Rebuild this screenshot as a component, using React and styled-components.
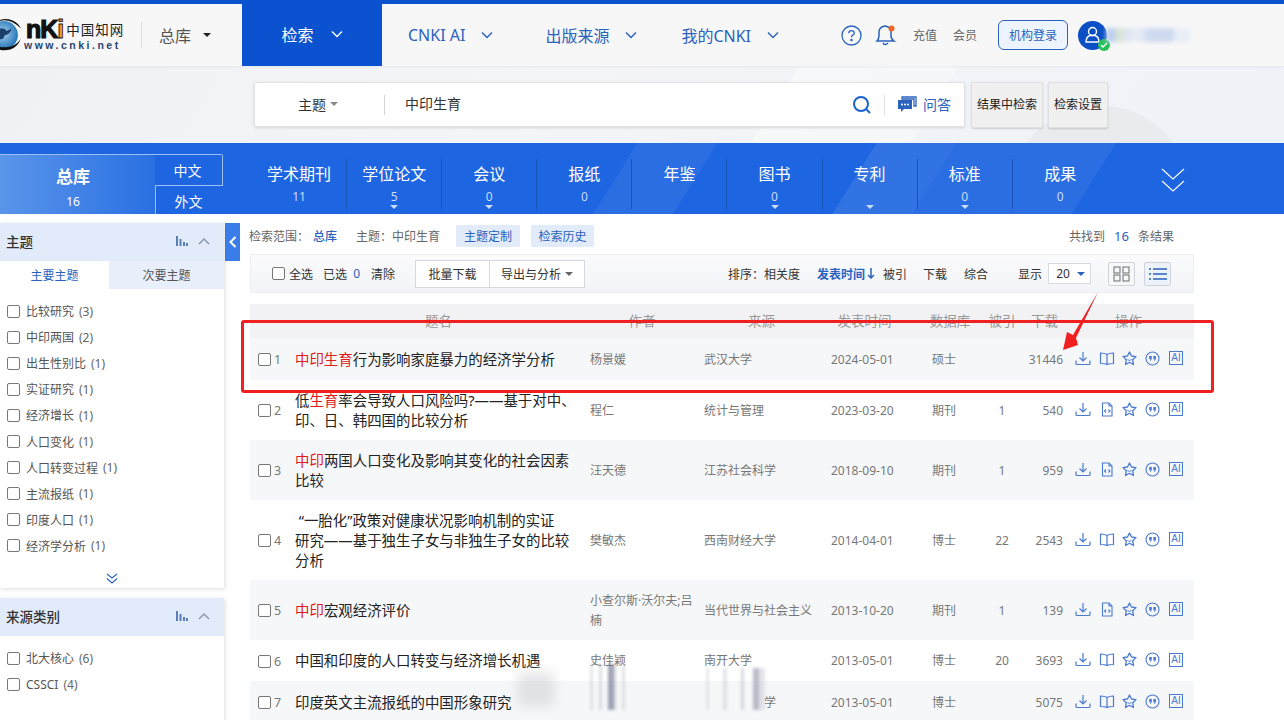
import React from 'react';
import styled, { createGlobalStyle } from 'styled-components';

const Global = createGlobalStyle`
  html, body { margin: 0; padding: 0; background: #fff; }
  body { font-family: "Noto Sans", "Noto Sans CJK SC", sans-serif; color: #333; }
  * { box-sizing: border-box; }
`;

const Page = styled.div`
  position: relative;
  width: 1284px;
  height: 720px;
  overflow: hidden;
  background: #fff;
`;

const Header = styled.header`
  height: 66px;
  border-top: 4px solid #0a52d0;
  background: #f7f7f8;
  display: flex;
  align-items: stretch;
  box-shadow: 0 1px 3px rgba(0,0,0,.06);
  position: relative;
`;
const LogoBox = styled.div`
  display: flex;
  align-items: center;
  margin-left: -14px;
  flex: none;
  width: 155px;
`;
const LogoWords = styled.div`
  display: flex;
  flex-direction: column;
  margin: -4px 0 0 2px;
`;
const LogoTop = styled.div`
  display: flex;
  align-items: center;
  height: 28px;
  padding-left: 2px;
`;
const LogoN = styled.span`
  font: 900 25px/28px "Liberation Sans", sans-serif;
  color: #111;
  letter-spacing: -1px;
  -webkit-text-stroke: 1.2px #111;
`;
const LogoI = styled.span`
  font: 900 25px/28px "Liberation Sans", sans-serif;
  color: ${p => p.$c};
  -webkit-text-stroke: .8px #111;
`;
const LogoCn = styled.span`
  font: 400 13.500px/20px "Noto Sans CJK SC", sans-serif;
  color: #222;
  letter-spacing: 1px;
  margin-left: 2px;
`;
const LogoUrl = styled.span`
  font: 700 10.500px/11px "Liberation Sans", sans-serif;
  letter-spacing: 2.500px;
  color: #28446f;
  margin-top: -3px;
`;
const HeadDivider = styled.span`
  width: 1px;
  height: 26px;
  background: #dcdde0;
  align-self: center;
  flex: none;
`;
const LibSwitch = styled.div`
  width: 100px;
  display: flex;
  align-items: center;
  padding-left: 17px;
  font-size: 16px;
  color: #555;
  flex: none;
`;
const Caret = styled.i`
  display: inline-block;
  border-left: ${p => p.$s || 4}px solid transparent;
  border-right: ${p => p.$s || 4}px solid transparent;
  border-top: ${p => p.$s || 4}px solid ${p => p.$c || '#222'};
  margin-left: ${p => p.$ml || 0}px;
`;
const ActiveTab = styled.div`
  width: 140px;
  margin-top: -4px;
  background: #0a52d0;
  color: #fff;
  font-size: 16px;
  display: flex;
  align-items: center;
  justify-content: center;
  gap: 17px;
  padding-top: 2px;
`;
const MainNav = styled.nav`
  display: flex;
  align-items: center;
  padding-left: 26px;
  width: 438px;
  flex: none;
`;
const MainItem = styled.span`
  display: flex;
  align-items: center;
  gap: 16px;
  font-size: 16px;
  color: #2a62bd;
  margin-left: ${p => p.$ml || 0}px;
`;
const UserArea = styled.div`
  display: flex;
  align-items: center;
  margin-left: 21px;
`;
const BellIcon = styled.svg`
  margin-left: 13px;
`;
const HeadLink = styled.span`
  font-size: 12px;
  color: #666;
  margin-left: ${p => p.$ml}px;
`;
const LoginBtn = styled.span`
  width: 70px;
  height: 30px;
  margin-left: 21px;
  border: 1px solid #2a62bd;
  border-radius: 6px;
  background: #eef4fd;
  color: #2a62bd;
  font-size: 12px;
  display: flex;
  align-items: center;
  justify-content: center;
`;
const Avatar = styled.span`
  position: relative;
  width: 29px;
  height: 29px;
  margin-left: 10px;
  border-radius: 50%;
  background: #0a4fc4;
  display: flex;
  align-items: center;
  justify-content: center;
  flex: none;
`;
const AvatarBadge = styled.span`
  position: absolute;
  right: -3px;
  bottom: -1px;
  width: 12px;
  height: 12px;
  border-radius: 50%;
  background: #28c05c;
  display: flex;
  align-items: center;
  justify-content: center;
`;
const BlurName = styled.span`
  width: 84px;
  height: 14px;
  margin-left: -1px;
  display: block;
  filter: blur(2px);
  background: linear-gradient(90deg, #bfd0ec 0 12%, #d8e6d8 12% 22%, #dfe5f2 22% 30%, #e6ebf5 30% 42%, #cfdaf0 50% 80%, #e8edf6 82% 100%);
`;

const SearchZone = styled.section`
  height: 77px;
  display: flex;
  align-items: center;
  padding: 0 0 0 254px;
  background:
    radial-gradient(circle at 1100px 130px, #e9ebef 0 90px, transparent 91px),
    linear-gradient(122deg, transparent 0 60%, rgba(255,255,255,.35) 60% 72%, transparent 72%),
    linear-gradient(122deg, #f0f1f4 0%, #f3f5f8 40%, #eff2f7 100%);
`;
const SearchBox = styled.div`
  width: 711px;
  height: 45px;
  background: #fff;
  border: 1px solid #e2e2e2;
  border-radius: 2px;
  box-shadow: 0 1px 3px rgba(0,0,0,.12);
  display: flex;
  align-items: center;
  color: #333;
  flex: none;
`;
const FieldPick = styled.span`
  width: 130px;
  height: 20px;
  display: flex;
  align-items: center;
  padding: 0 0 2px 43px;
  border-right: 1px solid #d5d5d5;
  font-size: 14px;
  gap: 4px;
`;
const Query = styled.span`
  flex: 1;
  padding: 0 0 4px 20px;
  font-size: 14px;
`;
const AskDivider = styled.span`
  width: 1px;
  height: 20px;
  background: #dedede;
  margin: 0 12px 0 12px;
`;
const AskLabel = styled.span`
  color: #2a62bd;
  font-size: 14px;
  margin: 0 13px 2px 6px;
`;
const GrayBtn = styled.span`
  height: 46px;
  width: ${p => p.$w}px;
  margin-left: ${p => p.$ml}px;
  background: #f0f0f0;
  border: 1px solid #e0e0e0;
  box-shadow: 0 1px 2px rgba(0,0,0,.15);
  border-radius: 2px;
  font-size: 12px;
  color: #222;
  display: flex;
  align-items: center;
  justify-content: center;
  padding-bottom: 2px;
  flex: none;
`;

const DbBar = styled.section`
  height: 71px;
  display: flex;
  background:
    linear-gradient(122deg, transparent 0 66%, rgba(255,255,255,.09) 66% 72%, rgba(255,255,255,.06) 72% 84%, transparent 84%),
    linear-gradient(122deg, transparent 0 48%, rgba(255,255,255,.06) 48% 54%, transparent 54%),
    #1e65e1;
`;
const TotalCell = styled.div`
  width: 155px;
  margin-top: 11px;
  border-top: 1px solid #9dc0f3;
  background: linear-gradient(90deg, #5a95ea, #2a70e3);
  color: #fff;
  display: flex;
  flex-direction: column;
  align-items: center;
  padding-right: 9px;
  flex: none;
`;
const TotalName = styled.strong`
  font-size: 17px;
  line-height: 24px;
  margin-top: 10px;
`;
const TotalNum = styled.span`
  font-size: 12px;
  line-height: 16px;
  margin-top: 5px;
`;
const LangCol = styled.div`
  width: 68px;
  margin-top: 11px;
  flex: none;
  color: #fff;
  font-size: 14px;
`;
const LangTop = styled.div`
  height: 32px;
  display: flex;
  align-items: center;
  justify-content: center;
  border: 1px solid #9dc0f3;
  border-left: 0;
  border-radius: 0 2px 0 0;
  padding-right: 2px;
`;
const LangBottom = styled.div`
  height: 28px;
  display: flex;
  align-items: center;
  justify-content: center;
  border-left: 1px solid #9dc0f3;
  padding: 2px 2px 0 0;
`;
const DbList = styled.div`
  display: flex;
  margin-left: 29px;
  flex: none;
`;
const DbItem = styled.div`
  width: 95.100px;
  margin-top: 16px;
  height: 50px;
  display: flex;
  flex-direction: column;
  align-items: center;
  border-right: ${p => p.$last ? '0' : '1px solid #1a53b6'};
  color: #fff;
`;
const DbLabel = styled.span`
  font-size: 16px;
  line-height: 22px;
  margin-top: 4px;
`;
const DbNum = styled.span`
  font-size: 12px;
  line-height: 16px;
  height: 16px;
  margin-top: 4px;
  color: #c9dcfa;
`;
const ChevronCol = styled.div`
  margin-left: 53px;
  margin-top: 25px;
`;

const Body = styled.div`
  display: flex;
  align-items: flex-start;
`;
const Side = styled.aside`
  width: 224px;
  margin-top: 9px;
  flex: none;
`;
const Panel = styled.div`
  background: #fff;
  box-shadow: 1px 1px 4px rgba(0,0,0,.14);
  margin-bottom: ${p => p.$mb || 0}px;
  min-height: ${p => p.$h}px;
`;
const PanelHead = styled.div`
  height: 38px;
  background: #e2ebf9;
  display: flex;
  align-items: center;
  padding: 0 14px 2px 6px;
  font-size: 13.500px;
  font-weight: 500;
  color: #333;
`;
const PanelTitle = styled.span`
  flex: 1;
`;
const PanelIconGap = styled.span`
  width: 10px;
`;
const PanelTabs = styled.div`
  display: flex;
  height: 28px;
  font-size: 12px;
`;
const PanelTab = styled.span`
  width: ${p => p.$w}px;
  flex: none;
  display: flex;
  align-items: center;
  justify-content: center;
  background: ${p => p.$on ? '#fff' : '#e8effa'};
  color: ${p => p.$on ? '#2a62bd' : '#555'};
`;
const FilterList = styled.ul`
  list-style: none;
  margin: 0;
  padding: ${p => p.$pt}px 0 0 7px;
`;
const FilterRow = styled.li`
  height: 26.100px;
  display: flex;
  align-items: center;
  gap: 6px;
  font-size: 12px;
  color: #555;
`;
const Check = styled.span`
  width: 13px;
  height: 13px;
  border: 1px solid #777;
  border-radius: 2px;
  background: #fff;
  display: inline-block;
  flex: none;
`;
const Count = styled.span`
  color: #666;
  margin-left: -1px;
  font-size: 12px;
`;
const More = styled.div`
  height: 28px;
  display: flex;
  justify-content: center;
  align-items: center;
  padding-top: 11px;
`;
const Toggle = styled.div`
  width: 15px;
  height: 38px;
  margin: 9px 0 0 1px;
  background: #3a7ce8;
  display: flex;
  align-items: center;
  justify-content: center;
  flex: none;
`;
const Content = styled.main`
  width: 944px;
  margin-left: 10px;
  flex: none;
`;
const InfoLine = styled.div`
  height: 40px;
  display: flex;
  align-items: center;
  font-size: 12px;
  color: #666;
  margin-left: -1px;
  padding-top: 4px;
`;
const ScopeLink = styled.strong`
  color: #2a62bd;
  font-weight: 500;
  margin: 0 19px 0 4px;
`;
const InfoTag = styled.span`
  height: 22px;
  width: ${p => p.$w}px;
  margin-left: ${p => p.$ml}px;
  background: #e2ebf9;
  border-radius: 2px;
  display: flex;
  align-items: center;
  justify-content: center;
  color: #2a62bd;
  flex: none;
`;
const Total = styled.span`
  margin-left: auto;
  margin-right: 20px;
  display: flex;
  align-items: center;
  gap: 9px;
`;
const TotalN = styled.b`
  color: #2a62bd;
  font-weight: 400;
  font-size: 13px;
`;
const ToolBar = styled.div`
  height: 39px;
  border: 1px solid #eceef2;
  background: linear-gradient(180deg, #fbfbfc, #f2f4f8);
  display: flex;
  align-items: center;
  padding-left: 21px;
  font-size: 12px;
  color: #333;
`;
const ToolText = styled.span`
  margin-left: ${p => p.$ml || 0}px;
  color: ${p => p.$c || '#333'};
  font-weight: ${p => p.$b ? 600 : 400};
  display: inline-flex;
  align-items: center;
  gap: 2px;
  white-space: nowrap;
  flex: none;
`;
const ZeroMark = styled.span`
  color: #2a62bd;
  margin-left: 1px;
`;
const ToolBtn = styled.span`
  height: 28px;
  width: ${p => p.$w}px;
  margin-left: ${p => p.$ml || 0}px;
  background: #fff;
  border: 1px solid #d5d8de;
  display: flex;
  align-items: center;
  justify-content: center;
  gap: 4px;
  font-size: 12px;
  flex: none;
`;
const Select = styled.span`
  width: 43px;
  height: 21px;
  margin-left: 6px;
  background: #fff;
  border: 1px solid #d8dbe2;
  display: flex;
  align-items: center;
  justify-content: space-between;
  padding: 0 5px 0 7px;
  font-size: 12px;
  flex: none;
`;
const ViewBtn = styled.span`
  width: 27px;
  height: 24px;
  margin-left: ${p => p.$ml}px;
  border: 1px solid #cfd3da;
  border-radius: 2px;
  background: ${p => p.$on ? '#eef3fb' : '#f7f8fa'};
  display: flex;
  align-items: center;
  justify-content: center;
  flex: none;
`;
const cols = '45px 295px 114px 127px 85px 58px 52px 37px 131px';
const THead = styled.div`
  margin-top: 11px;
  height: 34px;
  display: grid;
  grid-template-columns: ${cols};
  background: #f2f2f4;
  font-size: 13.500px;
  color: #999;
  align-items: center;
  padding-bottom: 3px;
`;
const Th = styled.span`
  text-align: center;
  white-space: nowrap;
  padding-left: ${p => p.$pl || 0}px;
  padding-right: ${p => p.$pr || 0}px;
`;
const Row = styled.div`
  min-height: 41.500px;
  display: grid;
  grid-template-columns: ${cols};
  align-items: center;
  background: ${p => p.$alt ? '#f6f7f9' : '#fff'};
  padding: 11px 0 9px;
  font-size: 12px;
  color: #777;
`;
const NumCell = styled.span`
  display: flex;
  align-items: center;
  gap: 3px;
  padding-left: 8px;
  font-size: 12.500px;
  color: #777;
`;
const Title = styled.span`
  font-size: 14.450px;
  line-height: 20px;
  color: #222;
  padding-right: 10px;
  & em { font-style: normal; color: #e01b1b; }
`;
const Cell = styled.span`
  text-align: ${p => p.$a || 'left'};
  line-height: 20px;
  padding-right: ${p => p.$pr || 0}px;
  padding-left: ${p => p.$pl || 0}px;
  white-space: ${p => p.$nw ? 'nowrap' : 'normal'};
`;
const Ops = styled.span`
  display: flex;
  align-items: center;
  gap: 7.500px;
  padding-left: 12px;
  margin-top: -3px;
`;
const AiBox = styled.span`
  width: 14px;
  height: 14px;
  border: 1px solid #4a7bd0;
  font: 400 10px/12px "Liberation Sans", sans-serif;
  color: #4a7bd0;
  text-align: center;
  display: block;
  margin-left: 2px;
`;
const RedFrame = styled.div`
  position: absolute;
  left: 241px;
  top: 320px;
  width: 973px;
  height: 73px;
  border: 3px solid #f02020;
  border-radius: 3px;
  pointer-events: none;
`;
const ArrowSvg = styled.svg`
  position: absolute;
  left: 1055px;
  top: 288px;
  pointer-events: none;
`;
const Smear = styled.div`
  position: absolute;
  left: ${p => p.$x}px;
  top: ${p => p.$y}px;
  width: ${p => p.$w}px;
  height: ${p => p.$h}px;
  filter: blur(${p => p.$b || 2}px);
  background: ${p => p.$bg};
  pointer-events: none;
`;

const bars1 = 'linear-gradient(90deg, rgba(180,183,195,.35) 0 8%, transparent 8% 24%, rgba(170,173,190,.4) 24% 32%, transparent 32% 48%, rgba(120,125,150,.7) 48% 62%, rgba(190,193,205,.4) 62% 72%, transparent 72% 84%, rgba(180,183,195,.4) 84% 92%, transparent 92%)';
const bars2 = 'linear-gradient(90deg, rgba(190,193,205,.35) 0 5%, transparent 5% 28%, rgba(180,183,195,.35) 28% 34%, transparent 34% 56%, rgba(170,173,190,.45) 56% 62%, transparent 62% 76%, rgba(140,145,165,.6) 76% 86%, rgba(190,193,205,.4) 86% 95%, transparent 95%)';

const ico = '#4a7bd0';
const DownloadIcon = () => (
  <svg width="16" height="15" viewBox="0 0 16 15" fill="none" stroke={ico} strokeWidth="1.200">
    <path d="M8 1v8.500M4.500 6.500 8 10l3.500-3.500" />
    <path d="M1 9.500 1 12.500Q1 13.500 2 13.500H14Q15 13.500 15 12.500V9.500" />
  </svg>
);
const BookIcon = () => (
  <svg width="16" height="15" viewBox="0 0 16 15" fill="none" stroke={ico} strokeWidth="1.200">
    <path d="M8 3.500Q6 2 1.500 2V12.500Q6 12.500 8 13.500Q10 12.500 14.500 12.500V2Q10 2 8 3.500V13.500" />
  </svg>
);
const DocIcon = () => (
  <svg width="16" height="15" viewBox="0 0 16 15" fill="none" stroke={ico} strokeWidth="1.100">
    <path d="M3.500 1H10L13 4V14H3.500Z" />
    <path d="M10 1V4H13M7 7.500 5.500 9 7 10.500M9.500 7.500 11 9 9.500 10.500" />
  </svg>
);
const StarIcon = () => (
  <svg width="15" height="15" viewBox="0 0 15 15" fill="none" stroke={ico} strokeWidth="1.300" strokeLinejoin="round">
    <path d="M7.500 1 9.500 5 14 5.600 10.700 8.800 11.500 13.500 7.500 11.300 3.500 13.500 4.300 8.800 1 5.600 5.500 5Z" />
    <path d="M5.500 8.500Q7.500 10.500 9.500 8.500" strokeWidth="1" />
  </svg>
);
const QuoteIcon = () => (
  <svg width="15" height="15" viewBox="0 0 15 15" fill="none" stroke={ico} strokeWidth="1.100">
    <circle cx="7.500" cy="7.500" r="6.500" />
    <path d="M4.200 5h2.600v2.600q0 1.700-1.800 2.500l-.3-.6q.8-.5.9-1.300H4.200ZM8.300 5h2.600v2.600q0 1.700-1.800 2.500l-.3-.6q.8-.5.9-1.300H8.300Z" fill={ico} stroke="none" />
  </svg>
);
const BarsIcon = ({ c = '#5a7fb8' }) => (
  <svg width="12" height="10" viewBox="0 0 12 10" fill={c}>
    <rect x="0" y="0" width="2" height="10" /><rect x="3.500" y="3" width="2" height="7" />
    <rect x="7" y="6" width="2" height="4" /><rect x="10" y="7" width="2" height="3" />
  </svg>
);
const Up = () => (
  <svg width="12" height="8" viewBox="0 0 12 8" fill="none" stroke="#8a9ab0" strokeWidth="1.500"><path d="M1 7 6 2l5 5" /></svg>
);
const Down = ({ c = '#2a62bd', w = 12, sw = 1.400 }) => (
  <svg width={w} height="8" viewBox="0 0 12 8" fill="none" stroke={c} strokeWidth={sw}><path d="M1 1.500 6 6.500l5-5" /></svg>
);

const filters1 = [['比较研究','(3)'],['中印两国','(2)'],['出生性别比','(1)'],['实证研究','(1)'],['经济增长','(1)'],['人口变化','(1)'],['人口转变过程','(1)'],['主流报纸','(1)'],['印度人口','(1)'],['经济学分析','(1)']];
const filters2 = [['北大核心','(6)'],['CSSCI','(4)']];
const dbs = [['学术期刊','11',0],['学位论文','5',1],['会议','0',1],['报纸','0',0],['年鉴','',0],['图书','0',1],['专利','',1],['标准','0',1],['成果','0',0]];
const rows = [
  { t: <><em>中印生育</em>行为影响家庭暴力的经济学分析</>, a: '杨景媛', s: '武汉大学', d: '2024-05-01', db: '硕士', c: '', dl: '31446', book: 1, alt: 1 },
  { t: <>低<em>生育</em>率会导致人口风险吗?——基于对中、印、日、韩四国的比较分析</>, a: '程仁', s: '统计与管理', d: '2023-03-20', db: '期刊', c: '1', dl: '540' },
  { t: <><em>中印</em>两国人口变化及影响其变化的社会因素比较</>, a: '汪天德', s: '江苏社会科学', d: '2018-09-10', db: '期刊', c: '1', dl: '959', alt: 1 },
  { t: <>&nbsp;“一胎化”政策对健康状况影响机制的实证<br />研究——基于独生子女与非独生子女的比较<br />分析</>, a: '樊敏杰', s: '西南财经大学', d: '2014-04-01', db: '博士', c: '22', dl: '2543', book: 1 },
  { t: <><em>中印</em>宏观经济评价</>, a: '小查尔斯·沃尔夫;吕楠', s: '当代世界与社会主义', d: '2013-10-20', db: '期刊', c: '1', dl: '139', alt: 1 },
  { t: <>中国和印度的人口转变与经济增长机遇</>, a: '史佳颖', s: '南开大学', d: '2013-05-01', db: '博士', c: '20', dl: '3693', book: 1 },
  { t: <>印度英文主流报纸的中国形象研究</>, a: '', s: '学', spl: 60, d: '2013-05-01', db: '博士', c: '', dl: '5075', book: 1, alt: 1 },
];

export default function App() {
  return (
    <Page>
      <Global />
      <Header>
        <LogoBox>
          <svg width="36" height="36" viewBox="0 0 31 31">
            <defs>
              <radialGradient id="g" cx="45%" cy="45%" r="60%">
                <stop offset="0%" stopColor="#a7d2ee" /><stop offset="100%" stopColor="#1c6fb4" />
              </radialGradient>
            </defs>
            <circle cx="15.500" cy="15.500" r="12" fill="url(#g)" />
            <path d="M10 11q5-3 8 1l4-2q-1 5-6 6-1 4-4 3-3-3-2-8Z" fill="#1b3f6b" />
            <path d="M3 21Q9 31 21 28Q27 26 30 19Q24 27 15 26Q8 26 3 21Z" fill="#111" />
            <path d="M5 8Q12-1 23 3Q28 5 30 10Q22 2 14 3Q8 4 5 8Z" fill="#111" />
          </svg>
          <LogoWords>
            <LogoTop>
              <LogoN>nK</LogoN><LogoI $c="#f29a1f">i</LogoI>
              <LogoCn>中国知网</LogoCn>
            </LogoTop>
            <LogoUrl>www.cnki.net</LogoUrl>
          </LogoWords>
        </LogoBox>
        <HeadDivider />
        <LibSwitch>总库<Caret $ml={12} /></LibSwitch>
        <ActiveTab>检索<Down c="#fff" /></ActiveTab>
        <MainNav>
          <MainItem>CNKI AI<Down /></MainItem>
          <MainItem $ml={52}>出版来源<Down /></MainItem>
          <MainItem $ml={44}>我的CNKI<Down /></MainItem>
        </MainNav>
        <UserArea>
          <svg width="21" height="21" viewBox="0 0 21 21" fill="none" stroke="#2a62bd" strokeWidth="1.300">
            <circle cx="10.500" cy="10.500" r="9.500" />
            <path d="M7.800 8.200q0-2.600 2.700-2.600t2.700 2.400q0 1.500-1.500 2.200-1.200.6-1.200 2" />
            <circle cx="10.500" cy="15" r=".6" fill="#2a62bd" />
          </svg>
          <BellIcon width="22" height="24" viewBox="0 0 22 24" fill="none" stroke="#2a62bd" strokeWidth="1.500">
            <path d="M2 18q2-2 2-5V9q0-5 6-6 6 1 6 6v4q0 3 3 5Z" />
            <path d="M8 20q2 3 5 0" />
            <circle cx="16.500" cy="5.500" r="3" fill="#f5641e" stroke="none" />
          </BellIcon>
          <HeadLink $ml={16}>充值</HeadLink>
          <HeadLink $ml={16}>会员</HeadLink>
          <LoginBtn>机构登录</LoginBtn>
          <Avatar>
            <svg width="17" height="18" viewBox="0 0 17 18" fill="none" stroke="#fff" strokeWidth="1.400">
              <circle cx="8.500" cy="5.500" r="4" />
              <path d="M2 16q0-5 4-6.500h5q4 1.500 4 6.500Z" />
            </svg>
            <AvatarBadge>
              <svg width="8" height="8" viewBox="0 0 8 8" fill="none" stroke="#fff" strokeWidth="1.300"><path d="M1 4l2 2 4-4" /></svg>
            </AvatarBadge>
          </Avatar>
          <BlurName />
        </UserArea>
      </Header>

      <SearchZone>
        <SearchBox>
          <FieldPick>主题<Caret $c="#888" $s={4} /></FieldPick>
          <Query>中印生育</Query>
          <svg width="20" height="20" viewBox="0 0 20 20" fill="none" stroke="#1c62d0" strokeWidth="2">
            <circle cx="9" cy="9" r="7" /><path d="M14 14l4 4" />
          </svg>
          <AskDivider />
          <svg width="20" height="18" viewBox="0 0 20 18">
            <path d="M5 1h14v9h-2V3H5Z" fill="none" stroke="#2a62bd" strokeWidth="1.300" />
            <path d="M1 4h14v9H7l-3 3v-3H1Z" fill="#2a62bd" />
            <circle cx="5" cy="8.500" r="1" fill="#fff" /><circle cx="8" cy="8.500" r="1" fill="#fff" /><circle cx="11" cy="8.500" r="1" fill="#fff" />
          </svg>
          <AskLabel>问答</AskLabel>
        </SearchBox>
        <GrayBtn $w={72} $ml={6}>结果中检索</GrayBtn>
        <GrayBtn $w={60} $ml={5}>检索设置</GrayBtn>
      </SearchZone>

      <DbBar>
        <TotalCell>
          <TotalName>总库</TotalName>
          <TotalNum>16</TotalNum>
        </TotalCell>
        <LangCol>
          <LangTop>中文</LangTop>
          <LangBottom>外文</LangBottom>
        </LangCol>
        <DbList>
          {dbs.map(([n, c, caret], i) => (
            <DbItem key={n} $last={i === dbs.length - 1}>
              <DbLabel>{n}</DbLabel>
              <DbNum>{c}</DbNum>
              {caret ? <Caret $c="#c9dcfa" $s={4} /> : null}
            </DbItem>
          ))}
        </DbList>
        <ChevronCol>
          <svg width="24" height="24" viewBox="0 0 24 24" fill="none" stroke="#fff" strokeWidth="1.100">
            <path d="M1 1l11 10L23 1M1 13l11 10 11-10" />
          </svg>
        </ChevronCol>
      </DbBar>

      <Body>
        <Side>
          <Panel $h={365} $mb={10}>
            <PanelHead>
              <PanelTitle>主题</PanelTitle>
              <BarsIcon />
              <PanelIconGap />
              <Up />
            </PanelHead>
            <PanelTabs>
              <PanelTab $w={109} $on>主要主题</PanelTab>
              <PanelTab $w={115}>次要主题</PanelTab>
            </PanelTabs>
            <FilterList $pt={9}>
              {filters1.map(([n, c]) => (
                <FilterRow key={n}><Check />{n} <Count>{c}</Count></FilterRow>
              ))}
            </FilterList>
            <More>
              <svg width="12" height="11" viewBox="0 0 12 11" fill="none" stroke="#2a62bd" strokeWidth="1.100">
                <path d="M1 1l5 4 5-4M1 5.500l5 4.500 5-4.500" />
              </svg>
            </More>
          </Panel>
          <Panel $h={130}>
            <PanelHead>
              <PanelTitle>来源类别</PanelTitle>
              <BarsIcon />
              <PanelIconGap />
              <Up />
            </PanelHead>
            <FilterList $pt={9}>
              {filters2.map(([n, c]) => (
                <FilterRow key={n}><Check />{n} <Count>{c}</Count></FilterRow>
              ))}
            </FilterList>
          </Panel>
        </Side>
        <Toggle>
          <svg width="8" height="12" viewBox="0 0 8 12" fill="none" stroke="#fff" strokeWidth="2"><path d="M6.500 1 1.500 6l5 5" /></svg>
        </Toggle>
        <Content>
          <InfoLine>
            检索范围：
            <ScopeLink>总库</ScopeLink>
            主题：中印生育
            <InfoTag $w={64} $ml={16}>主题定制</InfoTag>
            <InfoTag $w={63} $ml={11}>检索历史</InfoTag>
            <Total>共找到 <TotalN>16</TotalN> 条结果</Total>
          </InfoLine>
          <ToolBar>
            <Check />
            <ToolText $ml={4}>全选</ToolText>
            <ToolText $ml={10}>已选<ZeroMark>&nbsp;0</ZeroMark></ToolText>
            <ToolText $ml={11}>清除</ToolText>
            <ToolBtn $w={75} $ml={20}>批量下载</ToolBtn>
            <ToolBtn $w={96} $ml={-1}>导出与分析<Caret $c="#666" /></ToolBtn>
            <ToolText $ml={143}>排序：相关度</ToolText>
            <ToolText $ml={17} $c="#2a62bd" $b>发表时间
              <svg width="8" height="11" viewBox="0 0 8 11" fill="none" stroke="#2a62bd" strokeWidth="1.500"><path d="M4 0v10M1 7l3 3 3-3" /></svg>
            </ToolText>
            <ToolText $ml={8}>被引</ToolText>
            <ToolText $ml={16}>下载</ToolText>
            <ToolText $ml={17}>综合</ToolText>
            <ToolText $ml={30}>显示</ToolText>
            <Select>20<Caret $c="#2a62bd" $s={4} /></Select>
            <ViewBtn $ml={17}>
              <svg width="17" height="16" viewBox="0 0 17 16" fill="none" stroke="#777" strokeWidth="1.100">
                <rect x="1" y="1" width="6" height="6" /><rect x="10" y="1" width="6" height="6" />
                <rect x="1" y="9" width="6" height="6" /><rect x="10" y="9" width="6" height="6" />
              </svg>
            </ViewBtn>
            <ViewBtn $ml={9} $on>
              <svg width="18" height="14" viewBox="0 0 18 14" fill="none" stroke="#2a62bd" strokeWidth="1.600">
                <path d="M0 2h2M4 2h14M0 7h2M4 7h14M0 12h2M4 12h14" />
              </svg>
            </ViewBtn>
          </ToolBar>
          <THead>
            <span />
            <Th $pr={8}>题名</Th>
            <Th $pr={10}>作者</Th>
            <Th $pr={12}>来源</Th>
            <Th $pr={18}>发表时间</Th>
            <Th $pl={10}>数据库</Th>
            <Th $pl={4}>被引</Th>
            <Th>下载</Th>
            <Th>操作</Th>
          </THead>
          {rows.map((r, i) => (
            <Row key={i} $alt={r.alt}>
              <NumCell><Check />{i + 1}</NumCell>
              <Title>{r.t}</Title>
              <Cell $pr={8}>{r.a}</Cell>
              <Cell $nw $pl={r.spl}>{r.s}</Cell>
              <Cell $nw>{r.d}</Cell>
              <Cell $a="center" $pr={2}>{r.db}</Cell>
              <Cell $a="center" $pl={4}>{r.c}</Cell>
              <Cell $a="right" $nw>{r.dl}</Cell>
              <Ops>
                <DownloadIcon />
                {r.book ? <BookIcon /> : <DocIcon />}
                <StarIcon />
                <QuoteIcon />
                <AiBox>AI</AiBox>
              </Ops>
            </Row>
          ))}
        </Content>
      </Body>

      <Smear $x={518} $y={672} $w={36} $h={34} $b={6} $bg="rgba(200,200,205,.45)" />
      <Smear $x={590} $y={664} $w={38} $h={46} $b={1.500} $bg={bars1} />
      <Smear $x={706} $y={668} $w={62} $h={42} $b={1.500} $bg={bars2} />
      <RedFrame />
      <ArrowSvg width="50" height="70" viewBox="0 0 50 70">
        <path d="M43 4 21 50 23 57 8 62 12 44 18 47Z" fill="#f02020" />
      </ArrowSvg>
    </Page>
  );
}
